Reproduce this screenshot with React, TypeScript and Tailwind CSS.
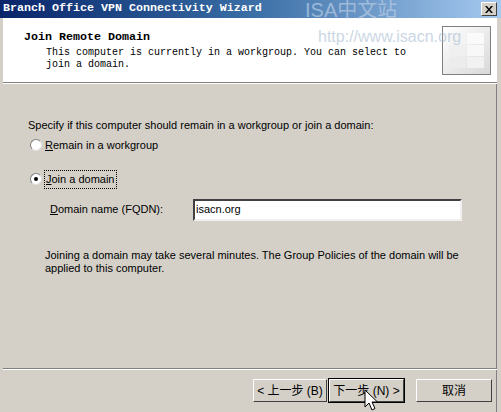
import React from 'react';

// Win2000-style wizard page: Branch Office VPN Connectivity Wizard, "Join Remote Domain"

const ui = { fontFamily: '"Liberation Sans", Tahoma, Arial, sans-serif' };
const mono = { fontFamily: '"Liberation Mono", "Courier New", monospace' };
const cjk = { fontFamily: '"Liberation Sans", "Noto Sans CJK SC", sans-serif' };

function TitleBar() {
  return (
    <div className="h-[18px] flex items-center justify-between pl-[3px] pr-[4px] bg-gradient-to-r from-[#0a246a] via-[#3a6ea5] to-[#a6caf0]">
      <span className="text-white font-bold text-[11.67px] leading-none" style={mono}>
        Branch Office VPN Connectivity Wizard
      </span>
      <button className="w-[16px] h-[14px] bg-[#d4d0c8] border border-t-white border-l-white border-r-[#404040] border-b-[#404040] flex items-center justify-center">
        <svg width="8" height="7" viewBox="0 0 8 7">
          <path d="M0 0h2l2 2.5L6 0h2L5 3.5 8 7H6L4 4.5 2 7H0l3-3.5z" fill="#000" />
        </svg>
      </button>
    </div>
  );
}

function Header() {
  return (
    <div className="h-[65px] bg-white border-b border-b-[#808080] flex justify-between pl-[21px] pr-[6px]">
      <div className="pt-[12px]" style={mono}>
        <h1 className="font-bold text-[11.67px] leading-[14px] text-black">Join Remote Domain</h1>
        <p className="pl-[22px] pt-[3px] text-[10px] leading-[12px] text-black">
          This computer is currently in a workgroup. You can select to
          <br />
          join a domain.
        </p>
      </div>
      <div className="mt-[8px] w-[49px] h-[49px] border border-[#808080] bg-gradient-to-br from-white via-[#ececec] to-[#d8d8d8] grid grid-cols-2 grid-rows-3 gap-px p-[6px]">
        <div className="bg-[#f4f4f4]" />
        <div className="bg-[#fafafa]" />
        <div className="bg-[#f0f0f0]" />
        <div className="bg-[#f8f8f8]" />
        <div className="bg-[#ececec]" />
        <div className="bg-[#f2f2f2]" />
      </div>
    </div>
  );
}

function Radio({ checked, children }: { checked?: boolean; children: React.ReactNode }) {
  return (
    <label className="flex items-center gap-[3px]">
      <span className="w-[12px] h-[12px] rounded-full bg-white border border-t-[#808080] border-l-[#808080] border-r-[#e0e0e0] border-b-[#e0e0e0] flex items-center justify-center">
        {checked && <span className="w-[4px] h-[4px] rounded-full bg-black" />}
      </span>
      {children}
    </label>
  );
}

function Btn({ children, active }: { children: React.ReactNode; active?: boolean }) {
  return (
    <button
      className={
        'h-[23px] bg-[#d4d0c8] border border-t-white border-l-white border-r-[#404040] border-b-[#404040] text-[12px] text-black flex items-center justify-center ' +
        (active ? 'outline outline-1 outline-black' : '')
      }
      style={cjk}
    >
      {children}
    </button>
  );
}

export default function App() {
  return (
    <div className="w-[501px] h-[412px] relative overflow-hidden bg-[#d4d0c8] flex flex-col" style={ui}>
      <TitleBar />
      <div className="flex-1 flex flex-col border-l-[3px] border-l-[#d4d0c8] border-r-[4px] border-r-[#d4d0c8] shadow-[inset_-1px_0_0_#808080]">
        <Header />
        <div className="h-px bg-white" />
        <div className="flex-1 pl-[25px] pt-[33px] text-[11px] text-black">
          <p>Specify if this computer should remain in a workgroup or join a domain:</p>
          <div className="pl-[2px] pt-[3px] flex flex-col gap-[18px]">
            <Radio>
              <span>
                <u>R</u>emain in a workgroup
              </span>
            </Radio>
            <Radio checked>
              <span className="outline outline-1 outline-dotted outline-black outline-offset-0 px-px">
                <u>J</u>oin a domain
              </span>
            </Radio>
          </div>
          <div className="flex items-center pl-[22px] pt-[11px]">
            <span className="w-[143px]">
              <u>D</u>omain name (FQDN):
            </span>
            <div className="w-[269px] h-[22px] bg-white border-2 border-t-[#404040] border-l-[#404040] border-r-[#f0f0f0] border-b-[#f0f0f0] flex items-center pl-[1px]">
              isacn.org
            </div>
          </div>
          <p className="pl-[17px] pt-[28px] leading-[13px]">
            Joining a domain may take several minutes. The Group Policies of the domain will be
            <br />
            applied to this computer.
          </p>
        </div>
        <div className="h-px bg-[#808080]" />
        <div className="h-px bg-white" />
        <div className="h-[42px] flex items-start justify-end gap-[2px] pt-[9px] pr-[5px]">
          <Btn>
            <span className="w-[72px]">&lt; 上一步 (B)</span>
          </Btn>
          <Btn active>
            <span className="w-[73px]">下一步 (N) &gt;</span>
          </Btn>
          <div className="w-[8px]" />
          <Btn>
            <span className="w-[74px]">取消</span>
          </Btn>
        </div>
      </div>

      {/* site watermark */}
      <div className="absolute left-[305px] top-0 text-[20px] text-[#b8cce4] opacity-70 leading-none pointer-events-none" style={cjk}>
        ISA中文站
      </div>
      <div className="absolute left-[318px] top-[29px] text-[16px] text-[#a9bdd4] opacity-60 leading-none pointer-events-none" style={ui}>
        http://www.isacn.org
      </div>

      {/* mouse pointer */}
      <svg className="absolute left-[364px] top-[389px]" width="14" height="23" viewBox="0 0 14 23">
        <path d="M1 1v17l4-4 3 7 3-1.5-3-6.5h5.5z" fill="#fff" stroke="#000" strokeWidth="1" />
      </svg>
    </div>
  );
}
